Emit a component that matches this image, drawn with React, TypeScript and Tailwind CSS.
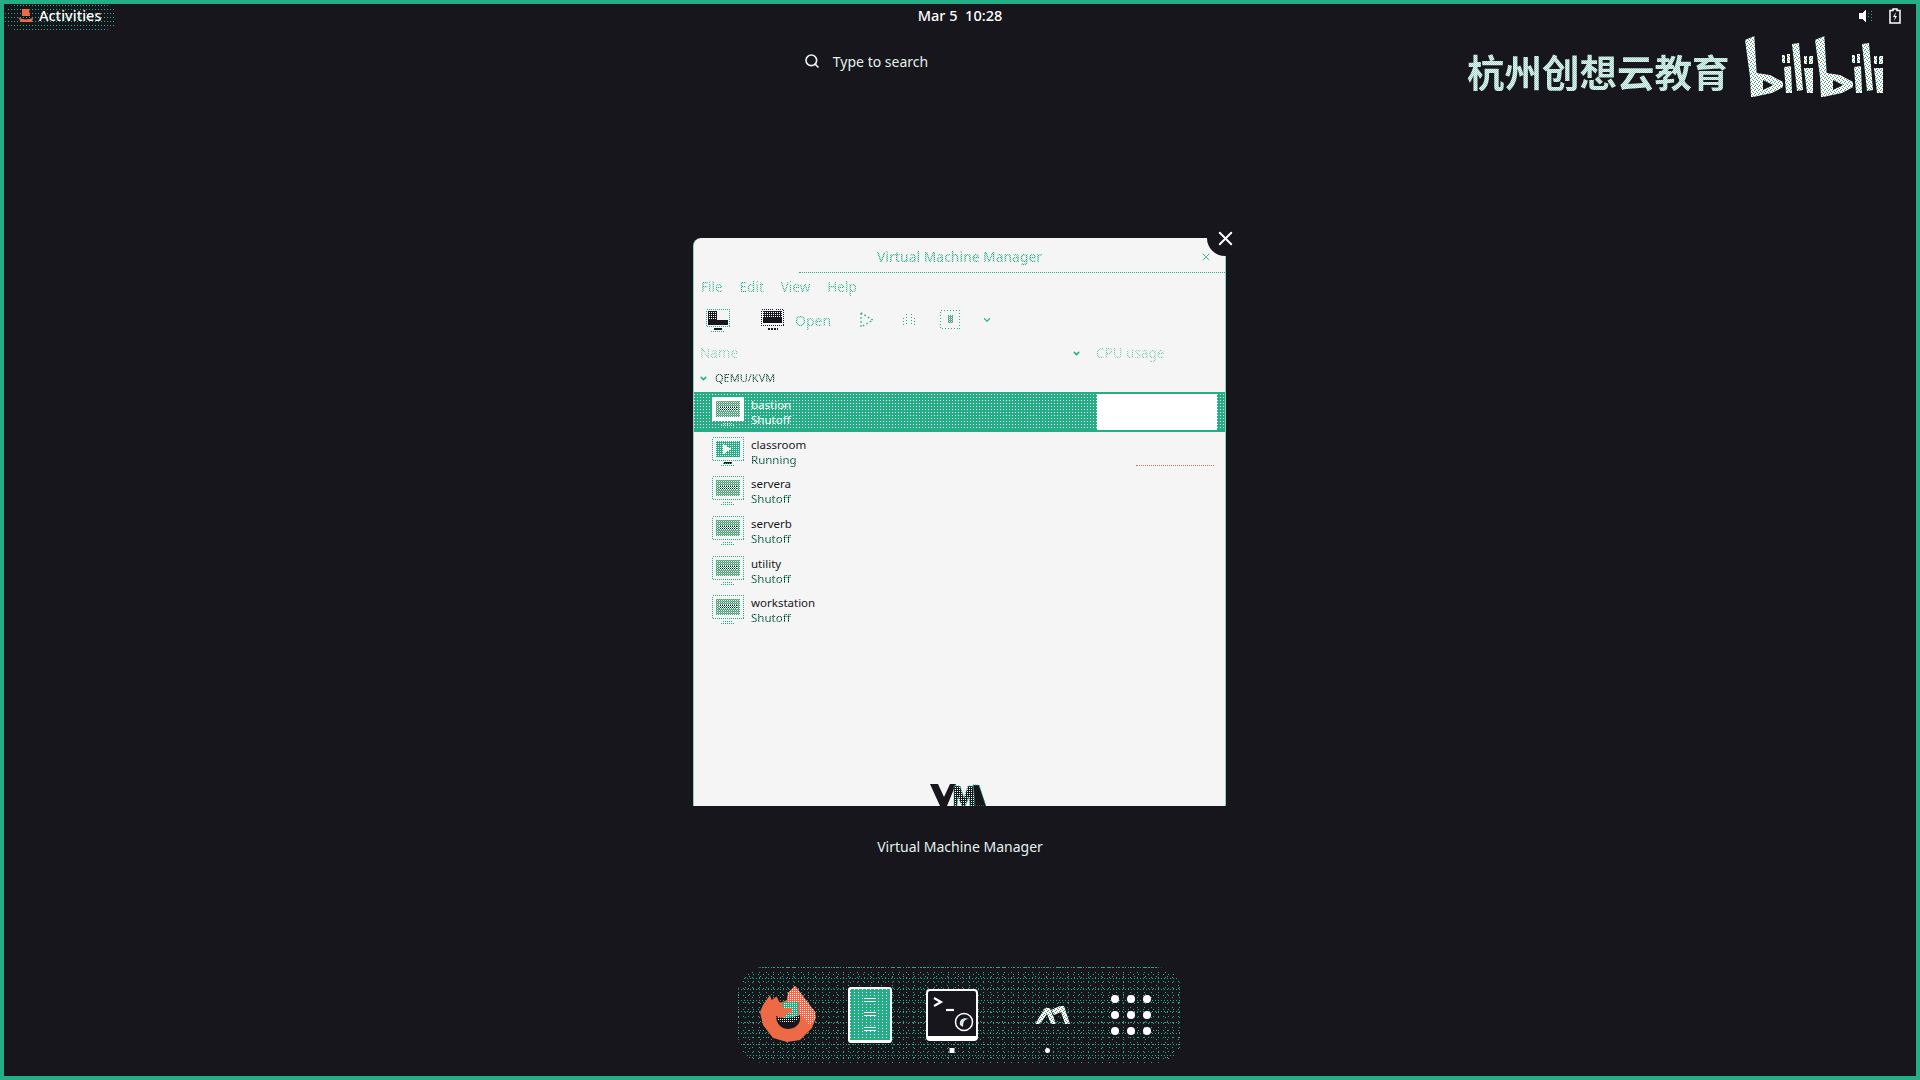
import React from 'react';
import { Search, X, ChevronDown } from 'lucide-react';

const vms = [
  { name: 'bastion', state: 'Shutoff', selected: true },
  { name: 'classroom', state: 'Running', running: true },
  { name: 'servera', state: 'Shutoff' },
  { name: 'serverb', state: 'Shutoff' },
  { name: 'utility', state: 'Shutoff' },
  { name: 'workstation', state: 'Shutoff' },
];

// shared dither fills, the screenshot is reduced to a tiny palette
function Patterns() {
  return (
    <svg className="absolute size-0">
      <defs>
        <pattern id="screen" width="2" height="2" patternUnits="userSpaceOnUse">
          <rect width="2" height="2" fill="#24ae86" />
          <rect width="1" height="1" fill="#d79c88" />
          <rect x="1" y="1" width="1" height="1" fill="#f5f5f5" />
        </pattern>
        <pattern id="band" width="2" height="2" patternUnits="userSpaceOnUse">
          <rect width="2" height="2" fill="#f5f5f5" />
          <rect width="1" height="1" fill="#16161c" />
          <rect x="1" y="1" width="1" height="1" fill="#24ae86" />
        </pattern>
        <pattern id="logo" width="4" height="4" patternUnits="userSpaceOnUse">
          <rect width="4" height="4" fill="#ffffff" />
          <rect width="1" height="1" fill="#24ae86" />
          <rect x="2" y="1" width="1" height="1" fill="#24ae86" />
          <rect x="1" y="2" width="1" height="1" fill="#24ae86" />
          <rect x="3" y="3" width="1" height="1" fill="#ee6a46" />
        </pattern>
        <pattern id="flame" width="2" height="2" patternUnits="userSpaceOnUse">
          <rect width="2" height="2" fill="#ee6a46" />
          <rect width="1" height="1" fill="#ffffff" />
        </pattern>
        <pattern id="teal" width="2" height="2" patternUnits="userSpaceOnUse">
          <rect width="2" height="2" fill="#24ae86" />
          <rect width="1" height="1" fill="#ffffff" />
        </pattern>
        <pattern id="globe" width="2" height="2" patternUnits="userSpaceOnUse">
          <rect width="2" height="2" fill="#16161c" />
          <rect width="1" height="1" fill="#ffffff" />
        </pattern>
      </defs>
    </svg>
  );
}

function Monitor({ running, selected }: { running?: boolean; selected?: boolean }) {
  const edge = selected ? '#ffffff' : '#24ae86';
  return (
    <svg width="32" height="30" viewBox="0 0 32 30" shapeRendering="crispEdges">
      {selected && <rect x="0" y="0" width="32" height="24" fill="#ffffff" />}
      {!selected && <rect x="0.500" y="0.500" width="31" height="23" fill="none" stroke={edge} strokeDasharray="1 1" />}
      {running ? (
        <>
          <rect x="4" y="4" width="24" height="16" fill="url(#teal)" />
          <path d="M11 7l9 5-9 5z" fill="#f5f5f5" />
          <rect x="12" y="25" width="8" height="2" fill="#16161c" />
        </>
      ) : (
        <>
          <rect x="4" y="4" width="24" height="16" fill="url(#screen)" />
          <rect x="7" y="10" width="18" height="4" fill="url(#band)" />
        </>
      )}
      <path d="M9 28.500h14" stroke={edge} strokeDasharray="1 1" />
      <path d="M11 26h10" stroke={edge} strokeDasharray="1 1" />
    </svg>
  );
}

function VmRow({ vm }: { vm: (typeof vms)[number] }) {
  if (vm.selected) {
    return (
      <div className="flex h-[40px] items-stretch bg-[#24ae86] py-[2px]">
        <div className="flex w-[403px] items-center bg-[conic-gradient(at_1px_1px,transparent_75%,#ffffff_75%)] bg-[length:3px_3px] pl-[18px]">
          <Monitor selected />
          <div className="ml-[7px] text-[11.500px] leading-[15px] text-white">
            <div>{vm.name}</div>
            <div>{vm.state}</div>
          </div>
        </div>
        <div className="w-[120px] bg-white" />
        <div className="flex-1 bg-[conic-gradient(at_1px_1px,transparent_75%,#ffffff_75%)] bg-[length:3px_3px]" />
      </div>
    );
  }
  return (
    <div className="relative flex h-[39.600px] items-center pl-[18px]">
      <Monitor running={vm.running} />
      <div className="ml-[7px] text-[11.500px] leading-[15px] text-[#16161c]">
        <div>{vm.name}</div>
        <div className="w-fit bg-[repeating-conic-gradient(#16161c_0_25%,#24ae86_0_50%)] bg-[length:2px_2px] bg-clip-text text-transparent">{vm.state}</div>
      </div>
      {vm.running && <div className="absolute left-[442px] top-[33px] w-[78px] border-t border-dotted border-[#b9776a]" />}
    </div>
  );
}

function VmWindow() {
  return (
    <div className="relative mr-[1px] mt-[167px] flex h-[568px] w-[533px] flex-col rounded-t-[8px] border-x border-dotted border-[#24ae86] bg-[#f5f5f5]">
      <div className="flex h-[34px] shrink-0 items-center justify-center pt-[4px] text-[13.700px] font-medium">
        <span className="bg-[repeating-conic-gradient(#24ae86_0_25%,#cfe3da_0_50%)] bg-[length:2px_2px] bg-clip-text text-transparent">Virtual Machine Manager</span>
      </div>
      <div className="ml-[105px] h-px shrink-0 border-t border-dotted border-[#24ae86]" />
      <div className="flex h-[26px] shrink-0 items-center gap-[17px] pl-[7px] pt-[2px] text-[13.500px]">
        <span className="bg-[repeating-conic-gradient(#24ae86_0_25%,#dce9e3_0_50%)] bg-[length:2px_2px] bg-clip-text text-transparent">File</span>
        <span className="bg-[repeating-conic-gradient(#24ae86_0_25%,#dce9e3_0_50%)] bg-[length:2px_2px] bg-clip-text text-transparent">Edit</span>
        <span className="bg-[repeating-conic-gradient(#24ae86_0_25%,#dce9e3_0_50%)] bg-[length:2px_2px] bg-clip-text text-transparent">View</span>
        <span className="bg-[repeating-conic-gradient(#24ae86_0_25%,#dce9e3_0_50%)] bg-[length:2px_2px] bg-clip-text text-transparent">Help</span>
      </div>
      <div className="flex h-[42px] shrink-0 items-center pl-[11px]">
        <svg width="26" height="24" viewBox="0 0 26 24" shapeRendering="crispEdges">
          <rect x="1.500" y="1.500" width="23" height="17" fill="none" stroke="#24ae86" strokeDasharray="1 1" />
          <rect x="3" y="3" width="9" height="9" fill="url(#globe)" />
          <rect x="3" y="12" width="20" height="5" fill="#16161c" />
          <path d="M9 21h8" stroke="#16161c" strokeWidth="2" />
          <path d="M6 23.500h14" stroke="#24ae86" strokeDasharray="1 1" />
        </svg>
        <svg className="ml-[30px]" width="24" height="24" viewBox="0 0 24 24" shapeRendering="crispEdges">
          <rect x="0.500" y="1.500" width="22" height="16" fill="none" stroke="#16161c" strokeDasharray="1 1" />
          <rect x="2" y="3" width="19" height="12" fill="#16161c" />
          <rect x="2" y="3" width="19" height="6" fill="url(#globe)" />
          <path d="M7 20.500h10" stroke="#16161c" strokeWidth="2" strokeDasharray="2 1" />
        </svg>
        <span className="ml-[10px] bg-[repeating-conic-gradient(#24ae86_0_25%,#dce9e3_0_50%)] bg-[length:2px_2px] bg-clip-text text-[14px] text-transparent">Open</span>
        <svg className="ml-[28px]" width="16" height="18" viewBox="0 0 16 18">
          <path d="M2 2l12 7-12 7z" fill="none" stroke="#24ae86" strokeWidth="1.500" strokeDasharray="1.500 2.500" />
        </svg>
        <svg className="ml-[27px]" width="14" height="14" viewBox="0 0 14 14" shapeRendering="crispEdges">
          <path d="M1.500 5v8M4.500 1v12M9.500 1v12M12.500 5v8" stroke="#24ae86" strokeDasharray="1 2" />
        </svg>
        <svg className="ml-[24px]" width="20" height="20" viewBox="0 0 20 20" shapeRendering="crispEdges">
          <rect x="0.500" y="0.500" width="19" height="18" fill="none" stroke="#24ae86" strokeDasharray="1 2" />
          <rect x="8" y="5" width="5" height="8" fill="url(#screen)" />
        </svg>
        <ChevronDown className="ml-[22px] size-[10px] text-[#24ae86]" strokeWidth={3} strokeDasharray="2 2" />
      </div>
      <div className="flex h-[24px] shrink-0 items-center pl-[6px] text-[13.500px]">
        <span className="w-[372px]">
          <span className="bg-[repeating-conic-gradient(#6cc4a9_0_25%,#f5f5f5_0_50%)] bg-[length:2px_2px] bg-clip-text text-transparent">Name</span>
        </span>
        <ChevronDown className="size-[9px] text-[#24ae86]" strokeWidth={4} />
        <span className="ml-[15px] bg-[repeating-conic-gradient(#6cc4a9_0_25%,#f5f5f5_0_50%)] bg-[length:2px_2px] bg-clip-text text-transparent">CPU usage</span>
      </div>
      <div className="flex h-[27px] shrink-0 items-center pb-[1px] pl-[5px] text-[11px]">
        <ChevronDown className="size-[9px] text-[#24ae86]" strokeWidth={4} />
        <span className="ml-[7px] bg-[repeating-conic-gradient(#16161c_0_25%,#6cc4a9_0_50%)] bg-[length:2px_2px] bg-clip-text text-transparent">QEMU/KVM</span>
      </div>
      {vms.map((vm) => (
        <VmRow key={vm.name} vm={vm} />
      ))}
      <div className="mt-auto flex justify-center pr-[3px]">
        <svg width="58" height="23" viewBox="0 0 58 23">
          <path d="M1 1h8l6 13 6-13h6l-9 22h-7z" fill="#16161c" />
          <path d="M25 3h6l4 12 4-12h5l3 20h-6l-1-9-4 9h-3l-4-9-1 9h-3z" fill="url(#globe)" stroke="#24ae86" strokeDasharray="1 1" />
          <path d="M44 2h6l7 21h-11z" fill="#16161c" stroke="#24ae86" strokeDasharray="1 1" />
        </svg>
      </div>
      <X className="absolute right-[13px] top-[13px] size-[12px] text-[#24ae86]" strokeWidth={2} strokeDasharray="2 2" />
      <div className="absolute right-[-18px] top-[-18px] flex size-[36px] items-center justify-center rounded-full bg-[#16161c]">
        <X className="size-[23px] text-white" strokeWidth={2} />
      </div>
    </div>
  );
}

function BiliLetters() {
  return (
    <>
      <path fillRule="evenodd" d="M0 4L9.300 0l2.400 37L25 39l13 7v5L27 57 8 61H6L5 41zM18 44v10l10-5z" />
      <path d="M37 19h3v8h-3zM42 18h3v9h-3zM39 31l7-1 1 27-6 0z" />
      <path d="M47 8l7-1 4 47-6 1z" />
      <path d="M59 20h3v8h-3zM64 20h4v8h-4zM59 32h9v25h-6z" />
    </>
  );
}

function BiliLogo() {
  return (
    <svg width="140" height="62" viewBox="0 0 140 62" fill="url(#logo)">
      <BiliLetters />
      <g transform="translate(70 0)">
        <BiliLetters />
      </g>
    </svg>
  );
}

function Dock() {
  return (
    <div className="mt-[110px] flex h-[96px] w-[444px] items-start rounded-[26px] pl-[22px] pt-[18px] [background-image:conic-gradient(at_1px_1px,transparent_75%,#24ae86_75%),conic-gradient(at_1px_1px,transparent_75%,#24ae86_75%),conic-gradient(at_1px_1px,transparent_75%,#24ae86_75%),conic-gradient(at_1px_1px,transparent_75%,#24ae86_75%)] [background-size:5px_7px,7px_5px,3px_11px,11px_9px]">
      {/* firefox */}
      <svg width="58" height="58" viewBox="0 0 58 58">
        <path d="M35 .700L55 27l.700 6-3.700 10-12 12-13 2-14-4L3 40 0 27l3-7 7-10 1.600 5 5-3.400L20 18l7-3 1-7z" fill="#ee6a46" />
        <path d="M35 .700L55 27l.700 6-5.700 8-6-8-4-3V18H27l1-10z" fill="url(#flame)" />
        <path d="M23 17h15v16l-6 3H23l3-7 6-1v-5h-9z" fill="url(#teal)" />
        <path d="M16 31c5 3 14 3 24-1v4c0 6-6 10-12 10-7 0-12-6-12-13z" fill="#16161c" />
        <path d="M16 31c5 3 14 3 24-1l-2 5c-6 3-12 3-20 1z" fill="url(#globe)" />
      </svg>
      {/* files */}
      <div className="ml-[30px] mt-[2px] flex h-[56px] w-[44px] flex-col items-center justify-around rounded-[3px] border-2 border-b-[3px] border-white bg-[#24ae86] py-[4px] [background-image:conic-gradient(at_1px_1px,transparent_75%,#ffffff_75%)] [background-size:4px_3px]">
        <div className="h-[4px] w-[12px] border-y border-white bg-[#24ae86]" />
        <div className="h-[4px] w-[12px] border-y border-white bg-[#24ae86]" />
        <div className="h-[4px] w-[12px] border-y border-white bg-[#24ae86]" />
      </div>
      {/* terminal */}
      <div className="relative ml-[34px] mt-[4px] h-[52px] w-[52px] rounded-[4px] border-2 border-b-[5px] border-white bg-[#16161c]">
        <svg className="absolute left-[5px] top-[6px]" width="26" height="16" viewBox="0 0 26 16" fill="none" stroke="#ffffff" strokeWidth="2.200">
          <path d="M1 1l7 4-7 4" />
          <path d="M13 13h8" />
        </svg>
        <svg className="absolute bottom-[4px] right-[2px]" width="20" height="20" viewBox="0 0 20 20">
          <circle cx="10" cy="10" r="8.500" fill="none" stroke="#ffffff" strokeWidth="1.500" />
          <path d="M6 13c-1-5 3-8 9-6-4 0-6 2-6 8z" fill="#d8ece4" />
        </svg>
        <div className="absolute left-1/2 top-[57px] size-[5px] -translate-x-1/2 bg-white" />
      </div>
      {/* virt-manager */}
      <div className="relative ml-[56px] mt-[20px] h-[20px] w-[37px]">
        <svg width="37" height="20" viewBox="0 0 37 20">
          <path d="M1 19L11 3h5l6 16h-5l-4-10-7 10zM17 5l9-4h4l6 18h-5l-4-12-7 3z" fill="url(#logo)" />
        </svg>
        <div className="absolute left-[11px] top-[43px] size-[5px] rounded-full bg-white" />
      </div>
      {/* app grid */}
      <div className="ml-[40px] mt-[10px] grid grid-cols-3 gap-[8px]">
        {Array.from({ length: 9 }).map((_, i) => (
          <div key={i} className="size-[8px] rounded-full bg-white" />
        ))}
      </div>
    </div>
  );
}

export default function App() {
  return (
    <div className="relative flex h-[1080px] w-[1920px] flex-col items-center overflow-hidden border-4 border-[#24ae86] bg-[#16161c] font-['Noto_Sans',sans-serif] text-white">
      <Patterns />

      {/* top bar */}
      <div className="grid h-[24px] w-full shrink-0 grid-cols-[1fr_auto_1fr] grid-rows-[24px] items-center text-[14.500px]">
        <div className="flex items-center">
          <div className="ml-[1px] mt-[3px] flex h-[25px] w-[111px] items-center rounded-[10px] bg-[conic-gradient(at_1px_1px,transparent_75%,#24ae86_75%)] bg-[length:3px_4px] pb-[3px] pl-[13px]">
            <svg width="16" height="14" viewBox="0 0 16 14">
              <path d="M4 0h7l1 7H4z" fill="#ee6a46" />
              <path d="M0 8c4 3 10 3 15 1l-1 4H3z" fill="#ee6a46" />
            </svg>
            <span className="ml-[5px] font-medium">Activities</span>
          </div>
        </div>
        <div className="whitespace-pre font-medium">Mar 5  10:28</div>
        <div className="flex items-center justify-end gap-[15px] pr-[15px]">
          <svg width="15" height="14" viewBox="0 0 15 14" shapeRendering="crispEdges">
            <path d="M0 4h3l4-4v14l-4-4H0z" fill="#ffffff" />
            <path d="M9.500 4v6M12.500 2v10" stroke="#24ae86" strokeDasharray="1 2" />
          </svg>
          <svg width="12" height="16" viewBox="0 0 12 16">
            <path d="M4 1h4v1.500h3V15H1V2.500h3z" fill="none" stroke="#ffffff" strokeWidth="1.500" />
            <path d="M7 4L4 9h2l-1 4 3-5H6z" fill="#ffffff" />
          </svg>
        </div>
      </div>

      {/* watermark */}
      <div className="absolute left-[1463px] top-[32px] flex items-center">
        <span className="mt-[8px] w-[278px] bg-[repeating-conic-gradient(#ffffff_0_25%,#8fd6c0_0_50%)] bg-[length:2px_2px] bg-clip-text font-['Noto_Sans_CJK_SC',sans-serif] text-[37.500px] font-bold leading-[40px] text-transparent">杭州创想云教育</span>
        <BiliLogo />
      </div>

      {/* search */}
      <div className="mr-[188px] mt-[23px] flex h-[20px] shrink-0 items-center gap-[13px] text-[14px] text-[#e4f1ec]">
        <Search className="size-[16px]" strokeWidth={2.500} />
        <span>Type to search</span>
      </div>

      <VmWindow />

      <div className="mt-[31px] h-[20px] shrink-0 text-[14px] leading-[20px] text-[#e4f1ec]">Virtual Machine Manager</div>

      <Dock />
    </div>
  );
}
